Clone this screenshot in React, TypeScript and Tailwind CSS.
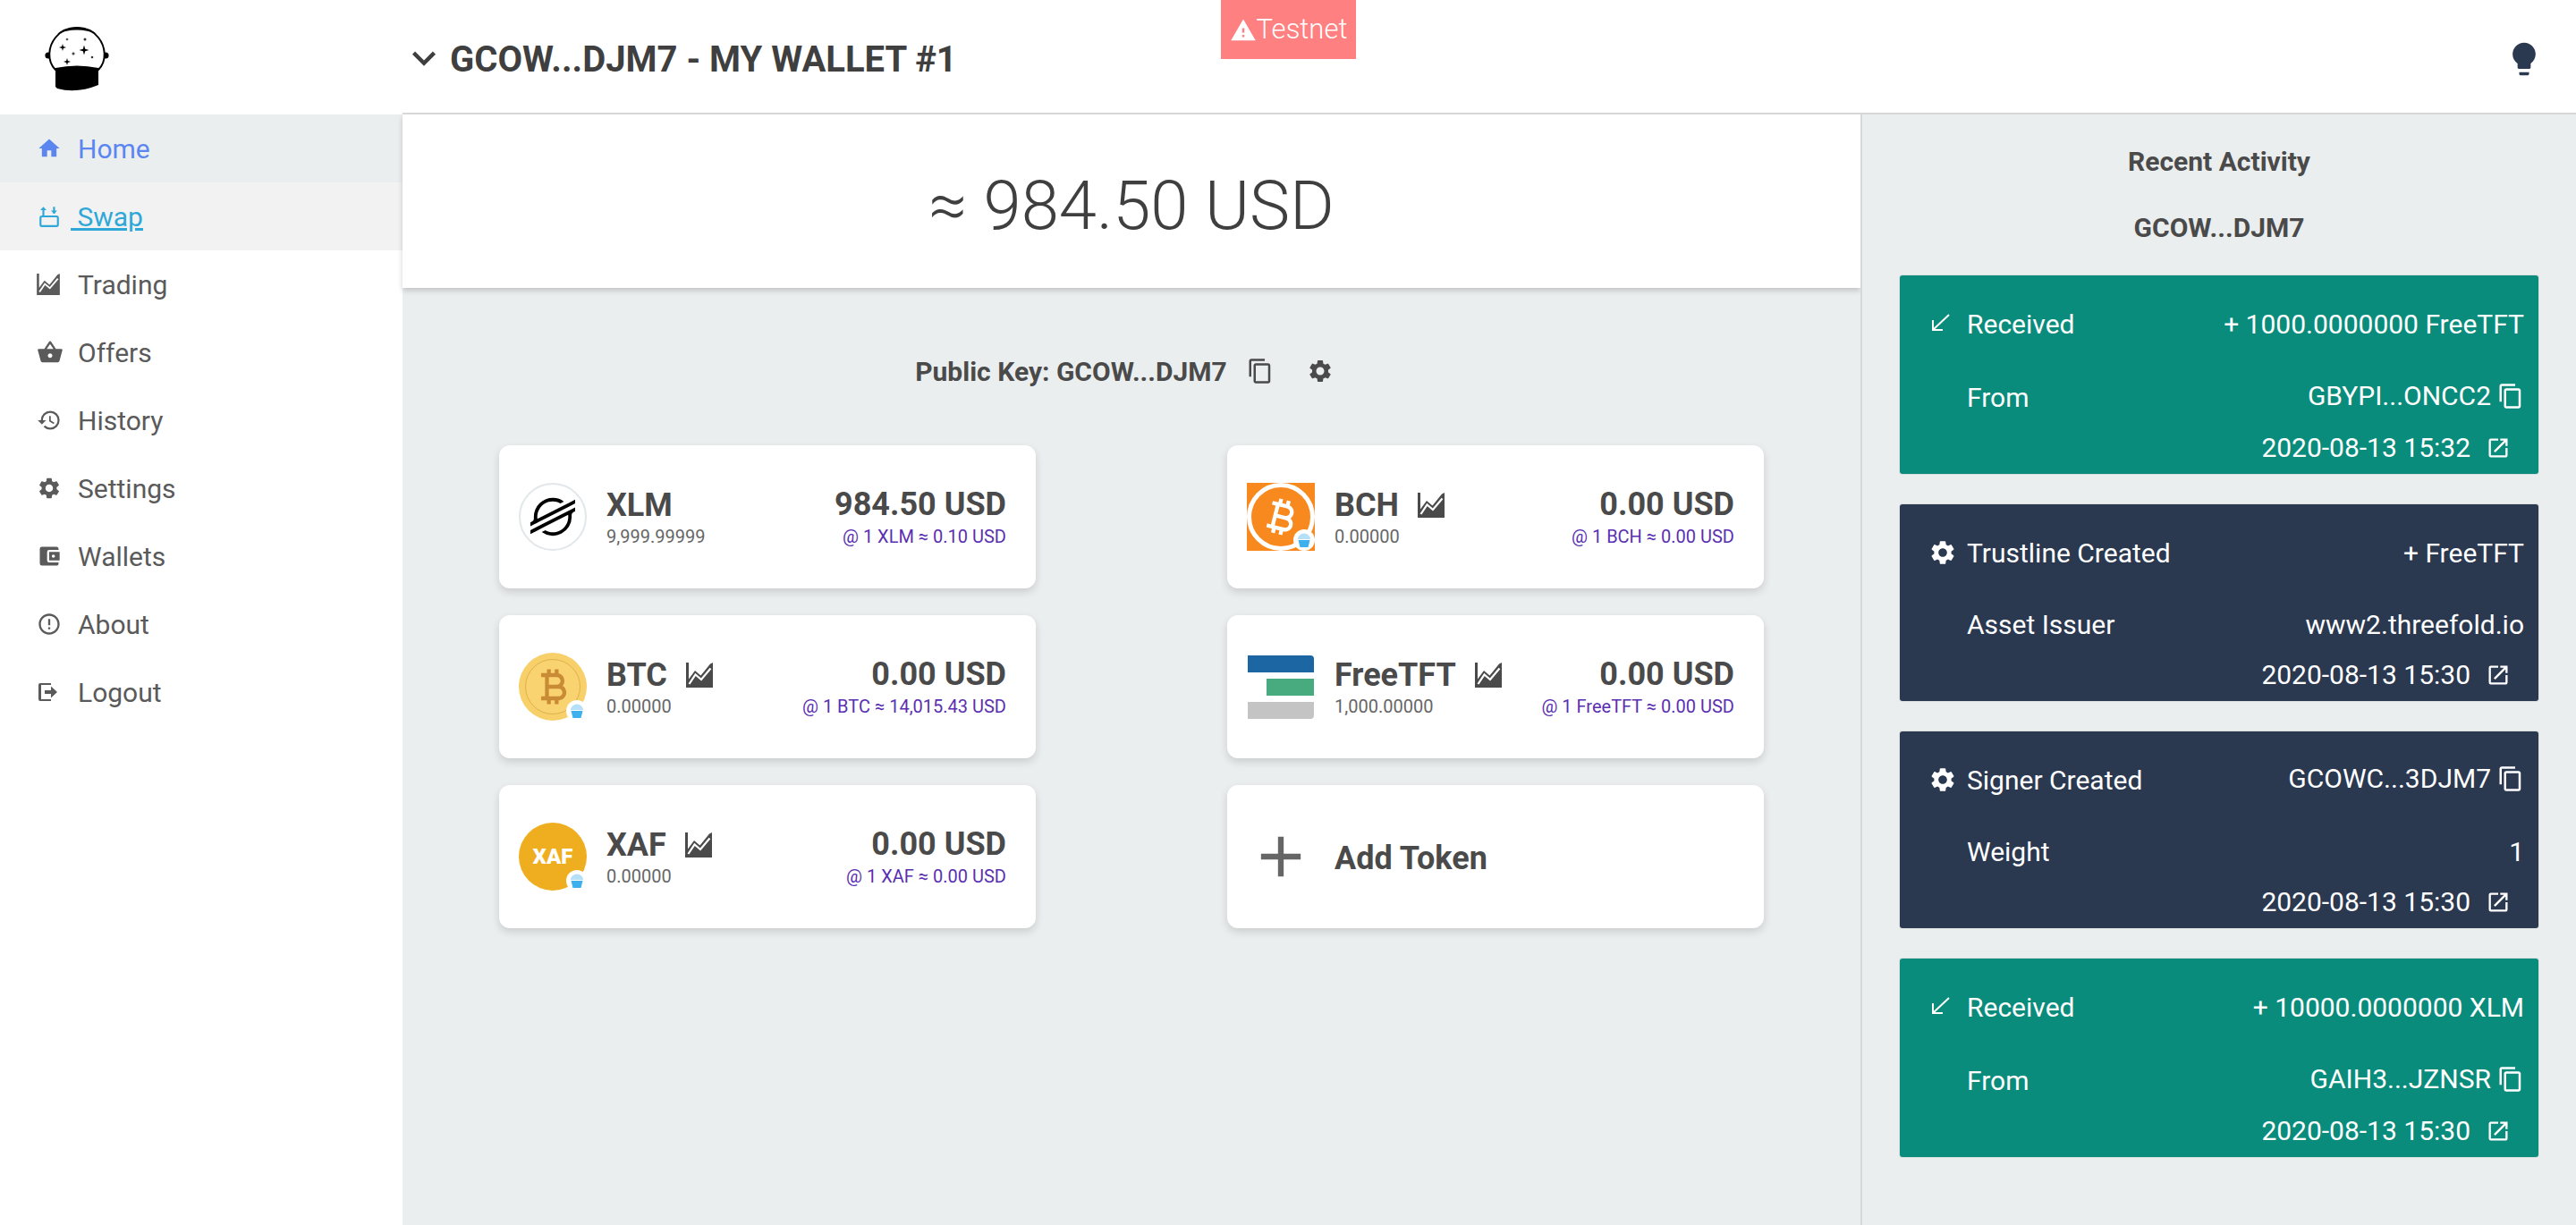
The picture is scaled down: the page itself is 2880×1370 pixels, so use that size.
import { ReactNode } from "react";
import {
  MdAccountBalanceWallet,
  MdAdd,
  MdContentCopy,
  MdCurrencyBitcoin,
  MdErrorOutline,
  MdHistory,
  MdHome,
  MdKeyboardArrowDown,
  MdLightbulb,
  MdOpenInNew,
  MdSettings,
  MdShoppingBasket,
  MdWarning,
} from "react-icons/md";
import { SiStellar } from "react-icons/si";

function ChartIcon({ className }: { className?: string }) {
  return (
    <svg viewBox="0 0 30 28" className={className} fill="currentColor">
      <path d="M0 0h3v18.5L10 9l6.5 5.5L27 1.5l3-1.5v28H0z" />
      <path d="M3.5 24l7-10.5 6.5 5.5L27.5 6.5" fill="none" stroke="#fff" strokeWidth="2.2" />
    </svg>
  );
}

function SwapIcon({ className }: { className?: string }) {
  return (
    <svg viewBox="0 0 24 24" className={className} fill="none" stroke="currentColor" strokeWidth="2">
      <rect x="3" y="12" width="18" height="10" rx="1.5" />
      <path d="M6 11V4M17 2v7" />
      <path d="M2.8 5.5L6 2l3.2 3.5zM13.8 6L17 9.5 20.2 6z" fill="currentColor" stroke="none" />
    </svg>
  );
}

function LogoutIcon({ className }: { className?: string }) {
  return (
    <svg viewBox="0 0 24 24" className={className} fill="currentColor">
      <path d="M4 2h12v2H5v16h11v2H4a2 2 0 0 1-2-2V4a2 2 0 0 1 2-2z" />
      <path d="M9 10h7V5.5l7 6.5-7 6.5V14H9z" />
    </svg>
  );
}

function ReceivedIcon() {
  return (
    <svg viewBox="0 0 21 19" className="w-[21px] h-[19px] -mt-[6px]" fill="none" stroke="currentColor" strokeWidth="2">
      <path d="M20 1L3 17M2 7v11h11" />
    </svg>
  );
}

// four pointed star for the logo
function star(x: number, y: number, r: number) {
  const k = r * 0.22;
  return `M${x} ${y - r}L${x + k} ${y - k}L${x + r} ${y}L${x + k} ${y + k}L${x} ${y + r}L${x - k} ${y + k}L${x - r} ${y}L${x - k} ${y - k}z`;
}

function Logo() {
  return (
    <svg viewBox="48 28 72 78" className="w-[72px] h-[78px]">
      <circle cx="52" cy="62" r="3.6" fill="#000" />
      <circle cx="116" cy="62" r="3.6" fill="#000" />
      <path
        d="M60 78C50 68 52 52 60 42c6-8 15-11 24-11s18 3 24 11c8 10 10 26 0 36z"
        fill="#fff"
        stroke="#000"
        strokeWidth="2"
      />
      <path d="M62 38c12-10 32-10 44 0-12-6-32-6-44 0z" fill="#000" />
      <path d="M60 76q24-5 48 0v19q-24 10-46 4l-2-2z" fill="#000" />
      <path d={star(92, 56, 5.5)} />
      <path d={star(68, 53, 4)} />
      <path d={star(73, 69, 4)} />
      <path d={star(80, 60, 2.6)} />
      <circle cx="73" cy="44" r="1.3" fill="#555" />
      <circle cx="93" cy="44" r="1.5" fill="#333" />
      <circle cx="101" cy="64" r="1.3" fill="#333" />
    </svg>
  );
}

function Muffin({ className }: { className?: string }) {
  return (
    <span className={`absolute flex items-center justify-center rounded-full bg-white ${className}`}>
      <svg viewBox="0 0 20 20" className="w-[20px] h-[20px]">
        <path d="M3 9a7 6.5 0 0 1 14 0z" fill="#b5e0f7" />
        <path d="M3.5 10h13l-2 8h-9z" fill="#3fb0ee" />
      </svg>
    </span>
  );
}

function Coin({ outer, children }: { outer: string; children: ReactNode }) {
  return (
    <div className={`relative w-[76px] h-[76px] rounded-full flex items-center justify-center ${outer}`}>
      {children}
      <Muffin className="w-[24px] h-[24px] -right-px -bottom-px" />
    </div>
  );
}

const stellarIcon = (
  <div className="w-[76px] h-[76px] rounded-full border-2 border-[#e2e7ea] flex items-center justify-center">
    <SiStellar className="w-[50px] h-[50px] text-black" />
  </div>
);

const btcIcon = (
  <Coin outer="bg-[#f8d06a]">
    <div className="w-[62px] h-[62px] rounded-full bg-[#f9d36f] border border-[#dfb04e] flex items-center justify-center">
      <MdCurrencyBitcoin className="w-[52px] h-[52px] text-[#c98b35]" />
    </div>
  </Coin>
);

const xafIcon = (
  <Coin outer="bg-[#efae1f]">
    <span className="text-white text-[24px] font-black leading-none">XAF</span>
  </Coin>
);

const bchIcon = (
  <div className="relative w-[76px] h-[76px] bg-[#f7891f] overflow-hidden">
    <div className="w-[76px] h-[76px] rounded-full border-[5px] border-white flex items-center justify-center">
      <MdCurrencyBitcoin className="w-[52px] h-[52px] text-white rotate-[14deg]" />
    </div>
    <Muffin className="w-[24px] h-[24px] right-0 bottom-0" />
  </div>
);

const tftIcon = (
  <div className="w-[76px] flex flex-col items-end gap-[7px] px-px">
    <div className="w-full h-[19px] bg-[#1b66a3] rounded-tr-[4px]" />
    <div className="w-[53px] h-[19px] bg-[#47ab7f]" />
    <div className="w-full h-[19px] bg-[#c4c4c4] rounded-br-[4px]" />
  </div>
);

type Token = {
  name: string;
  balance: string;
  usd: string;
  rate: string;
  icon: ReactNode;
  chart?: boolean;
};

const leftTokens: Token[] = [
  { name: "XLM", balance: "9,999.99999", usd: "984.50 USD", rate: "@ 1 XLM ≈ 0.10 USD", icon: stellarIcon },
  { name: "BTC", balance: "0.00000", usd: "0.00 USD", rate: "@ 1 BTC ≈ 14,015.43 USD", icon: btcIcon, chart: true },
  { name: "XAF", balance: "0.00000", usd: "0.00 USD", rate: "@ 1 XAF ≈ 0.00 USD", icon: xafIcon, chart: true },
];

const rightTokens: Token[] = [
  { name: "BCH", balance: "0.00000", usd: "0.00 USD", rate: "@ 1 BCH ≈ 0.00 USD", icon: bchIcon, chart: true },
  { name: "FreeTFT", balance: "1,000.00000", usd: "0.00 USD", rate: "@ 1 FreeTFT ≈ 0.00 USD", icon: tftIcon, chart: true },
];

const cardClass = "h-[160px] bg-white rounded-[12px] shadow-[0_4px_10px_rgba(0,0,0,0.14)]";

function TokenCard({ token }: { token: Token }) {
  return (
    <div className={`${cardClass} flex items-start pt-[42px] pl-[22px] pr-[33px]`}>
      <div className="w-[76px] h-[76px] flex items-center justify-center">{token.icon}</div>
      <div className="ml-[22px] pt-[3px]">
        <div className="flex items-center h-[43px]">
          <span className="text-[36px] font-bold text-[#4a4a4a]">{token.name}</span>
          {token.chart && <ChartIcon className="w-[30px] h-[28px] ml-[21px] text-[#4a4a4a]" />}
        </div>
        <div className="text-[20px] leading-[28px] text-[#666]">{token.balance}</div>
      </div>
      <div className="ml-auto text-right pt-[3px]">
        <div className="text-[36px] leading-[43px] font-bold text-[#4a4a4a]">{token.usd}</div>
        <div className="text-[20px] leading-[28px] text-[#5a2fb0]">{token.rate}</div>
      </div>
    </div>
  );
}

const navItems = [
  { label: "Trading", icon: <ChartIcon className="w-[26px] h-[24px]" /> },
  { label: "Offers", icon: <MdShoppingBasket className="w-[30px] h-[30px]" /> },
  { label: "History", icon: <MdHistory className="w-[28px] h-[28px]" /> },
  { label: "Settings", icon: <MdSettings className="w-[28px] h-[28px]" /> },
  { label: "Wallets", icon: <MdAccountBalanceWallet className="w-[28px] h-[28px]" /> },
  { label: "About", icon: <MdErrorOutline className="w-[28px] h-[28px]" /> },
  { label: "Logout", icon: <LogoutIcon className="w-[24px] h-[26px]" /> },
];

function Sidebar() {
  return (
    <aside className="w-[450px] shrink-0 bg-white">
      <div className="h-[128px] pl-[50px] pt-[28px]">
        <Logo />
      </div>
      <div className="h-[76px] bg-[#ebeeef] flex items-center text-[#5b86f0]">
        <div className="w-[87px] pl-[41px]">
          <MdHome className="w-[28px] h-[28px]" />
        </div>
        <span className="text-[30px] pt-px">Home</span>
      </div>
      <div className="h-[76px] bg-[#f2f2f2] flex items-center text-[#2fa8d8]">
        <div className="w-[79px] pl-[42px]">
          <SwapIcon className="w-[26px] h-[26px]" />
        </div>
        <span className="text-[30px] pt-px underline whitespace-pre"> Swap</span>
      </div>
      {navItems.map((item) => (
        <div key={item.label} className="h-[76px] flex items-center text-[#5a5a5a]">
          <div className="w-[87px] pl-[41px] flex">{item.icon}</div>
          <span className="text-[30px] pt-px">{item.label}</span>
        </div>
      ))}
    </aside>
  );
}

type Activity = {
  color: string;
  icon: ReactNode;
  title: string;
  value: string;
  valueCopy?: boolean;
  label: string;
  detail: string;
  detailCopy?: boolean;
  date: string;
  tall?: boolean;
};

const receivedIcon = <ReceivedIcon />;
const gearIcon = <MdSettings className="w-[32px] h-[32px] -ml-[3px] -mt-[3px]" />;

const activities: Activity[] = [
  {
    color: "bg-[#0a8c7c]",
    icon: receivedIcon,
    title: "Received",
    value: "+ 1000.0000000 FreeTFT",
    label: "From",
    detail: "GBYPI...ONCC2",
    detailCopy: true,
    date: "2020-08-13 15:32",
    tall: true,
  },
  {
    color: "bg-[#2a3850]",
    icon: gearIcon,
    title: "Trustline Created",
    value: "+ FreeTFT",
    label: "Asset Issuer",
    detail: "www2.threefold.io",
    date: "2020-08-13 15:30",
  },
  {
    color: "bg-[#2a3850]",
    icon: gearIcon,
    title: "Signer Created",
    value: "GCOWC...3DJM7",
    valueCopy: true,
    label: "Weight",
    detail: "1",
    date: "2020-08-13 15:30",
  },
  {
    color: "bg-[#0a8c7c]",
    icon: receivedIcon,
    title: "Received",
    value: "+ 10000.0000000 XLM",
    label: "From",
    detail: "GAIH3...JZNSR",
    detailCopy: true,
    date: "2020-08-13 15:30",
    tall: true,
  },
];

function CopyValue({ text, copy }: { text: string; copy?: boolean }) {
  if (!copy) return <span className="ml-auto">{text}</span>;
  return (
    <span className="ml-auto flex items-center -translate-y-[2px]">
      {text}
      <MdContentCopy className="w-[30px] h-[30px] ml-[7px]" />
    </span>
  );
}

function ActivityCard({ item }: { item: Activity }) {
  return (
    <div
      className={`${item.color} ${item.tall ? "h-[222px]" : "h-[220px]"} rounded-[3px] shadow-[0_0_0_1px_#dcdfe0] text-white text-[30px] leading-[38px] pt-[36px] pl-[32px] pr-[16px]`}
    >
      <div className="flex items-center h-[38px]">
        <div className="w-[43px] flex pl-[3px]">{item.icon}</div>
        <span>{item.title}</span>
        <CopyValue text={item.value} copy={item.valueCopy} />
      </div>
      <div className={`flex items-center h-[38px] ${item.tall ? "mt-[44px]" : "mt-[42px]"}`}>
        <span className="ml-[43px]">{item.label}</span>
        <CopyValue text={item.detail} copy={item.detailCopy} />
      </div>
      <div className="flex items-center justify-end h-[38px] mt-[18px] pr-[15px]">
        {item.date}
        <MdOpenInNew className="w-[28px] h-[28px] ml-[17px]" />
      </div>
    </div>
  );
}

export default function App() {
  return (
    <div className="flex h-screen overflow-hidden bg-white font-['Roboto',sans-serif]">
      <Sidebar />
      <main className="flex-1 flex flex-col min-w-0">
        <header className="relative h-[128px] shrink-0 border-b-2 border-[#d5d7d8] flex items-center pt-[4px] bg-white">
          <MdKeyboardArrowDown className="w-[52px] h-[52px] -ml-[2px] text-[#3f3f3f]" />
          <h1 className="ml-[3px] pt-[3px] text-[40px] leading-[46px] font-bold text-[#3f3f3f]">
            GCOW...DJM7 - MY WALLET #1
          </h1>
          <div className="absolute left-[915px] top-0 w-[151px] h-[66px] pt-px bg-[#ff8080] flex items-center justify-center text-white text-[31px] font-light">
            <MdWarning className="w-[30px] h-[30px]" />
            Testnet
          </div>
          <MdLightbulb className="absolute right-[36px] top-[44px] w-[44px] h-[44px] text-[#2a3850]" />
        </header>
        <div className="flex-1 flex min-h-0">
          <section className="flex-1 bg-[#ebeeef] min-w-0">
            <div className="h-[194px] bg-white shadow-[0_3px_6px_rgba(0,0,0,0.18)] flex items-center justify-center pt-[9px]">
              <span className="text-[76px] font-light text-[#3f3f3f]">≈ 984.50 USD</span>
            </div>
            <div className="flex items-center justify-center h-[38px] mt-[74px] pr-[16px] text-[#4a4a4a]">
              <span className="text-[30px] font-bold">Public Key: GCOW...DJM7</span>
              <MdContentCopy className="w-[30px] h-[30px] ml-[22px]" />
              <MdSettings className="w-[30px] h-[30px] ml-[37px]" />
            </div>
            <div className="grid grid-cols-[600px_600px] justify-between px-[108px] mt-[64px]">
              <div className="flex flex-col gap-[30px]">
                {leftTokens.map((t) => (
                  <TokenCard key={t.name} token={t} />
                ))}
              </div>
              <div className="flex flex-col gap-[30px]">
                {rightTokens.map((t) => (
                  <TokenCard key={t.name} token={t} />
                ))}
                <div className={`${cardClass} flex items-center pl-[22px]`}>
                  <MdAdd className="w-[76px] h-[76px] text-[#666]" />
                  <span className="ml-[22px] pt-[3px] text-[36px] font-bold text-[#4a4a4a]">Add Token</span>
                </div>
              </div>
            </div>
          </section>
          <aside className="w-[800px] shrink-0 bg-[#ebeeef] border-l-2 border-[#d6d8d9] pl-[42px] pr-[42px]">
            <div className="text-center text-[30px] leading-[36px] font-bold text-[#4a4a4a] pt-[35px]">
              Recent Activity
            </div>
            <div className="text-center text-[30px] leading-[36px] font-bold text-[#4a4a4a] mt-[38px]">
              GCOW...DJM7
            </div>
            <div className="flex flex-col gap-[34px] mt-[35px]">
              {activities.map((a, i) => (
                <ActivityCard key={i} item={a} />
              ))}
            </div>
          </aside>
        </div>
      </main>
    </div>
  );
}
